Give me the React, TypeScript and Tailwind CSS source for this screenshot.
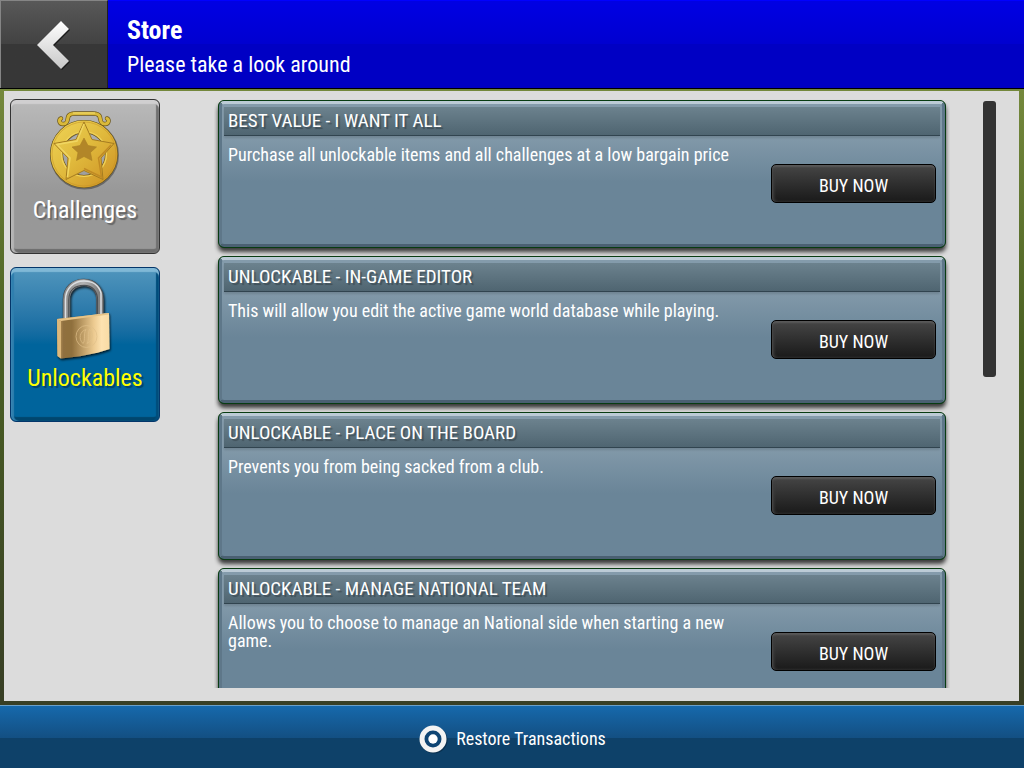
import clsx from "clsx";

type StoreItem = {
  title: string;
  description: string;
};

const items: StoreItem[] = [
  {
    title: "BEST VALUE - I WANT IT ALL",
    description:
      "Purchase all unlockable items and all challenges at a low bargain price",
  },
  {
    title: "UNLOCKABLE - IN-GAME EDITOR",
    description:
      "This will allow you edit the active game world database while playing.",
  },
  {
    title: "UNLOCKABLE - PLACE ON THE BOARD",
    description: "Prevents you from being sacked from a club.",
  },
  {
    title: "UNLOCKABLE - MANAGE NATIONAL TEAM",
    description:
      "Allows you to choose to manage an National side when starting a new game.",
  },
];

function ChevronIcon() {
  return (
    <svg viewBox="0 0 36 50" className="h-[50px] w-9" aria-hidden="true">
      <defs>
        <linearGradient id="chevron" x1="0" y1="0" x2="0" y2="1">
          <stop offset="0" stopColor="#ffffff" />
          <stop offset="1" stopColor="#c8c8c8" />
        </linearGradient>
      </defs>
      <path d="M26 2 34 10 18 26 34 42 26 50 2 26Z" fill="#1a1a1a" />
      <path d="M25 1 33 9 17 25 33 41 25 49 1 25Z" fill="url(#chevron)" />
    </svg>
  );
}

function MedalIcon() {
  const hanger =
    "M21 14.500C18.500 15 19 20 23 20C28.500 20 27 15 28.500 12C30 9.500 32 9.500 35 9.500H53C56 9.500 58 9.500 59.500 12C61 15 59.500 20 65 20C69 20 69.500 15 67 14.500";
  return (
    <svg viewBox="0 0 90 94" className="h-[94px] w-[90px]" aria-hidden="true">
      <defs>
        <linearGradient id="gold" x1="0" y1="0" x2="1" y2="1">
          <stop offset="0" stopColor="#ecd052" />
          <stop offset="0.5" stopColor="#e0b93c" />
          <stop offset="1" stopColor="#cf9526" />
        </linearGradient>
      </defs>
      <path
        d={hanger}
        fill="none"
        stroke="#6b5518"
        strokeWidth="4.500"
        strokeLinecap="round"
      />
      <path
        d={hanger}
        fill="none"
        stroke="#d9b93a"
        strokeWidth="3.200"
        strokeLinecap="round"
      />
      <path d="M33 9H55" stroke="#f3de74" strokeWidth="1" />
      <circle cx="44.500" cy="51" r="28" fill="none" stroke="#00000055" strokeWidth="13" />
      <circle cx="44" cy="50" r="27.500" fill="none" stroke="#6b5518" strokeWidth="13" />
      <circle cx="44" cy="50" r="27.500" fill="none" stroke="url(#gold)" strokeWidth="11.800" />
      <circle cx="44" cy="50" r="22.500" fill="none" stroke="#f0d45c" strokeWidth="1.200" />
      <circle cx="44" cy="50" r="32" fill="none" stroke="#c48f24" strokeWidth="1" opacity="0.500" />
      <path
        d="M44 18 52 35.500 74 39.500 61 54 63 75.500 44 66.500 26 75.500 28 54 14 39.500 36 35.500Z"
        fill="url(#gold)"
        stroke="#a57c20"
        strokeWidth="1"
        strokeLinejoin="round"
      />
      <path
        d="M44 20 37 37 17 40.500 30 54 27.500 73"
        fill="none"
        stroke="#f0d662"
        strokeWidth="1.500"
      />
      <path
        d="M44 64.500 61.500 73 58.500 54 71 41"
        fill="none"
        stroke="#c08a24"
        strokeWidth="1.500"
      />
      <path
        d="M44 34 48 41.500 56.500 43 50.500 48.500 52 56.500 44 52.500 36.500 56.500 38 48.500 32 43 40 41.500Z"
        fill="#b28628"
        stroke="#a98024"
        strokeWidth="0.600"
      />
    </svg>
  );
}

function PadlockIcon() {
  const shackle =
    "M26.500 50V28.500C26.500 18 34 11.500 44 11.500C54 11.500 60 19 60 28.500V44";
  return (
    <svg viewBox="0 1 90 94" className="h-[94px] w-[90px]" aria-hidden="true">
      <defs>
        <linearGradient id="brass" x1="0" y1="0" x2="1" y2="0">
          <stop offset="0" stopColor="#c9a568" />
          <stop offset="0.120" stopColor="#90703f" />
          <stop offset="0.280" stopColor="#8f6f3c" />
          <stop offset="0.700" stopColor="#ecca90" />
          <stop offset="0.850" stopColor="#fde2b0" />
          <stop offset="1" stopColor="#f8dba4" />
        </linearGradient>
        <linearGradient id="steel" x1="0" y1="0" x2="1" y2="0">
          <stop offset="0" stopColor="#8c8c8c" />
          <stop offset="0.500" stopColor="#b4b4b4" />
          <stop offset="1" stopColor="#7c7c7c" />
        </linearGradient>
        <filter id="lockShadow" x="-20%" y="-20%" width="140%" height="140%">
          <feDropShadow dx="1" dy="1.500" stdDeviation="1" floodOpacity="0.800" />
        </filter>
      </defs>
      <g filter="url(#lockShadow)">
        <path d={shackle} fill="none" stroke="#3f4449" strokeWidth="7.500" />
        <path d={shackle} fill="none" stroke="url(#steel)" strokeWidth="6.500" />
        <path
          d="M25.500 50V28.500C25.500 17 34 10 44 10C53 10 59 15 61 22V44"
          fill="none"
          stroke="#dde0e3"
          strokeWidth="1.500"
        />
        <path
          d="M28.800 49V29C28.800 19 35 14.300 44 14.300C52 14.300 57.500 20 57.500 29V43"
          fill="none"
          stroke="#4c4f52"
          strokeWidth="1.200"
        />
        <path d="M17 48 69 42 69.500 78C55 83 38 86 21 87.500L17.500 85Z" fill="url(#brass)" />
        <path d="M17 48 69 42V43.500L21 50 17 48Z" fill="#e7c488" />
        <path d="M17 48 21 50V87.500L17.500 85Z" fill="#dcb87c" />
      </g>
      <g fill="none" stroke="#e0c08a" strokeWidth="1" opacity="0.700">
        <ellipse cx="46.500" cy="65.500" rx="10.500" ry="11" />
        <path d="M46 58.500C40 60 38 68 43 72.500C46 69 43 63 46 58.500Z" />
        <path d="M49.500 58.500C54 62 53 70 47 72.500C50 68 47 63 49.500 58.500Z" />
      </g>
    </svg>
  );
}

function RestoreIcon() {
  return (
    <svg viewBox="0 0 30 30" className="size-[30px]" aria-hidden="true">
      <circle cx="16" cy="16" r="11" fill="none" stroke="#06233c" strokeWidth="5" opacity="0.600" />
      <circle cx="15" cy="15" r="9" fill="#0e4473" />
      <circle cx="15" cy="15" r="11" fill="none" stroke="#f3f3f3" strokeWidth="5" />
      <circle cx="15" cy="15" r="4.700" fill="#ffffff" />
    </svg>
  );
}

function Tabs() {
  const tile =
    "flex h-[155px] w-full flex-col items-center rounded-md border pt-1 text-2xl/6 [text-shadow:2px_2px_1px_#0005]";
  return (
    <nav className="flex w-[150px] shrink-0 flex-col gap-[13px]">
      <button
        className={clsx(
          tile,
          "border-[#333] bg-linear-to-b from-[#bababa] to-[#989898] to-60% text-white",
          "shadow-[inset_0_4px_1px_#d0cfd0,inset_3px_0_1px_#b4b4b4,inset_-3px_0_1px_#707070,inset_0_-4px_1px_#6c6c6c]"
        )}
      >
        <MedalIcon />
        Challenges
      </button>
      <button
        aria-current="page"
        className={clsx(
          tile,
          "border-[#04366a] bg-linear-to-b from-[#5096bd] to-[#00649c] to-50% text-[#ffff00]",
          "shadow-[inset_0_4px_1px_#80b8d6,inset_3px_0_1px_#2f7fae,inset_-3px_0_1px_#004d7c,inset_0_-4px_1px_#00466e]"
        )}
      >
        <PadlockIcon />
        Unlockables
      </button>
    </nav>
  );
}

function StoreCard({ item }: { item: StoreItem }) {
  return (
    <li className="h-[148px] shrink-0 rounded-md border border-[#083c12] bg-[#083c12] shadow-[0_4px_4px_#000b]">
      <div className="h-full rounded-[5px] border-[3px] border-t-[#bccbd6] border-r-[#5e7789] border-b-[#4a6072] border-l-[#5e7789] bg-linear-to-b from-[#849bab] from-20% to-[#6a8598] to-55% px-0.5 pt-[3px]">
        <h2 className="border-b border-[#31444f] bg-linear-to-b from-[#6c828e] to-[#4f6571] px-1 text-[19px]/7 shadow-[0_2px_2px_#0002] [text-shadow:2px_2px_1px_#0004]">
          {item.title}
        </h2>
        <div className="flex items-start gap-10 px-1">
          <p className="flex-1 pt-[10px] text-lg/[18px]">{item.description}</p>
          <button className="mt-7 h-[39px] w-[165px] rounded-[5px] border border-black bg-linear-to-b from-[#464646] to-[#1a1a1a] pt-1 text-lg/[18px] shadow-[inset_0_2px_2px_#5a5a5a,inset_2px_0_3px_#404040]">
            BUY NOW
          </button>
        </div>
      </div>
    </li>
  );
}

export default function App() {
  return (
    <div className="flex h-screen flex-col bg-linear-to-b from-[#74883c] from-12% via-[#4a6022] via-45% to-[#383f25] to-90% font-['Roboto_Condensed','Roboto',sans-serif] text-white">
      <header className="flex h-[89px] shrink-0 border-b border-black bg-linear-to-b from-[#0000e4] from-0% via-[#0000d0] via-50% to-[#0000c4] to-50% shadow-[inset_0_1px_0_#0000ff]">
        <button
          aria-label="Back"
          className="flex w-[108px] shrink-0 items-center justify-center border-t border-r border-l border-t-[#858585] border-r-[#202020] border-l-[#858585] bg-linear-to-b from-[#585858] from-0% via-[#424242] via-50% to-[#373737] to-50%"
        >
          <ChevronIcon />
        </button>
        <div className="px-[19px] pt-[14px]">
          <h1 className="text-[26px]/8 font-bold">Store</h1>
          <p className="pt-[5px] text-[22px]/7">Please take a look around</p>
        </div>
      </header>

      <main className="min-h-0 flex-1 pt-0.5 pr-[5px] pb-1 pl-1">
        <div className="flex h-full bg-[#dcdcdc] pt-2 pr-[23px] pb-[13px] pl-[6px]">
          <Tabs />
          <ul className="ml-[54px] flex flex-1 flex-col gap-2 overflow-y-auto px-1 pt-px [scrollbar-width:none]">
            {items.map((item) => (
              <StoreCard key={item.title} item={item} />
            ))}
          </ul>
          <div className="ml-[33px] w-[13px] pt-0.5">
            <div className="h-[47%] rounded-[3px] bg-[#333]" />
          </div>
        </div>
      </main>

      <footer className="flex h-[63px] shrink-0 items-center justify-center border-t border-[#6ba0c8] bg-linear-to-b from-[#1669ac] from-0% via-[#134f82] via-52% to-[#0e4169] to-52% pt-1">
        <button className="flex items-center gap-2 text-lg/7">
          <RestoreIcon />
          Restore Transactions
        </button>
      </footer>
    </div>
  );
}
